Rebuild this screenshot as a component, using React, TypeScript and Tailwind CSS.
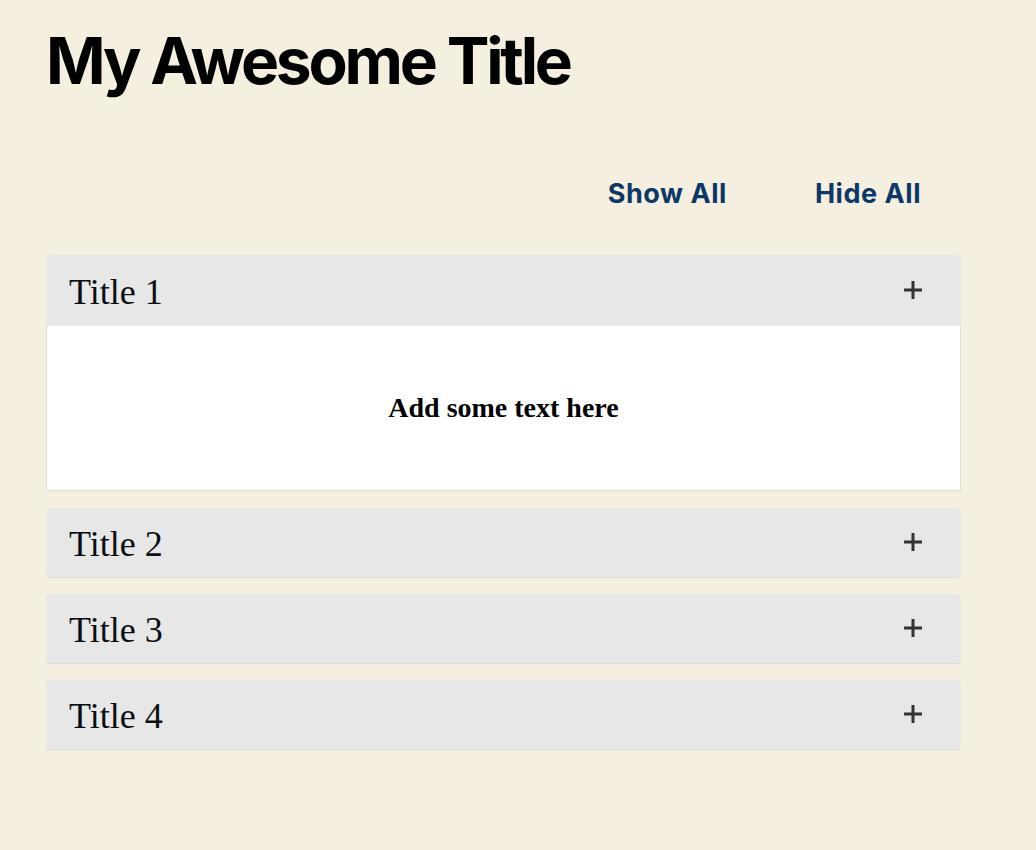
import React, { useState } from 'react';

const items = [
  { title: 'Title 1', body: 'Add some text here' },
  { title: 'Title 2', body: 'Add some text here' },
  { title: 'Title 3', body: 'Add some text here' },
  { title: 'Title 4', body: 'Add some text here' },
];

function PlusIcon() {
  return (
    <svg width="20" height="20" viewBox="0 0 20 20" className="text-[#333]">
      <path d="M10 1v18M1 10h18" stroke="currentColor" strokeWidth="3" />
    </svg>
  );
}

export default function App() {
  const [open, setOpen] = useState<boolean[]>([true, false, false, false]);

  const toggle = (i: number) =>
    setOpen((prev) => prev.map((v, idx) => (idx === i ? !v : v)));

  return (
    <div className="min-h-[850px] bg-[#f5efdf] px-[46px] pt-[22px]">
      <h1 className="font-['Inter',sans-serif] text-[64px] font-bold leading-[78px] tracking-[-0.05em] text-black">
        My Awesome Title
      </h1>

      <div className="mt-[74px] flex w-[915px] justify-end gap-[88px] pr-[40px] font-['Inter',sans-serif] text-[27px] font-bold tracking-[0.02em] text-[#0c3868]">
        <button onClick={() => setOpen(items.map(() => true))}>Show All</button>
        <button onClick={() => setOpen(items.map(() => false))}>Hide All</button>
      </div>

      <div className="mt-[40px] flex w-[915px] flex-col gap-[17px]">
        {items.map((item, i) => (
          <div key={item.title}>
            <button
              onClick={() => toggle(i)}
              className={`flex w-full items-center justify-between bg-[#e7e7e7] pl-[23px] pr-[38px] text-left ${
                open[i] ? 'h-[71px] rounded-t-[4px]' : 'h-[69px] rounded-[4px] shadow-[0_1px_0_#dcdcdc]'
              }`}
            >
              <span className="pt-[3px] font-['Liberation_Serif',serif] text-[36px] leading-none text-[#0a0f14]">
                {item.title}
              </span>
              <PlusIcon />
            </button>
            {open[i] && (
              <div className="flex h-[165px] items-center justify-center border border-t-0 border-[#dcdcdc] bg-white">
                <p className="font-['Liberation_Serif',serif] text-[28px] font-bold text-black">
                  {item.body}
                </p>
              </div>
            )}
          </div>
        ))}
      </div>
    </div>
  );
}
